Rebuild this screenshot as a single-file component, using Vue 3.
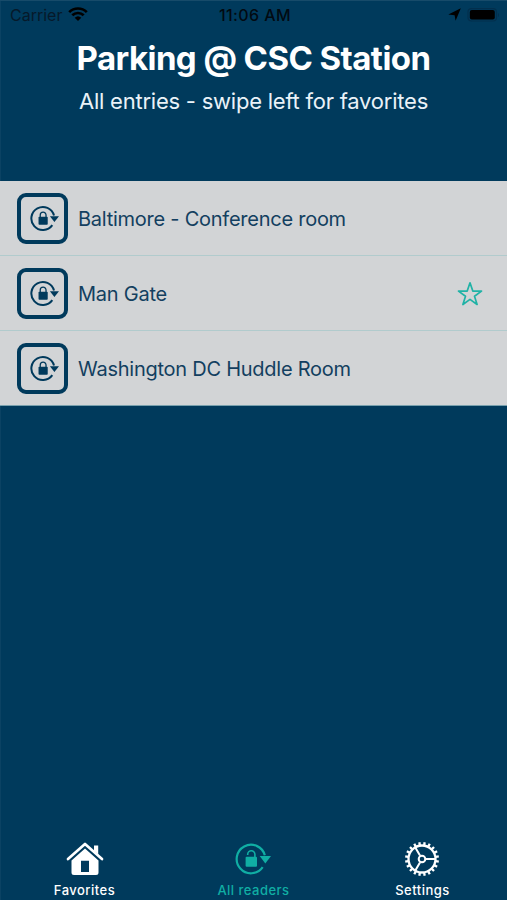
<script setup>
const entries = [
  { name: 'Baltimore - Conference room', favorite: false },
  { name: 'Man Gate', favorite: true },
  { name: 'Washington DC Huddle Room', favorite: false },
]
const teeth = Array.from({ length: 20 }, (_, i) => i * 18 + 9)
</script>

<template>
  <div class="screen">
    <header class="status">
      <div class="carrier">
        <span class="carrier-name">Carrier</span>
        <svg class="wifi" width="20" height="15" viewBox="0 0 20 15">
          <path d="M1.2 5.1a12.6 12.6 0 0 1 17.6 0M4.3 8.3a8.2 8.2 0 0 1 11.4 0" fill="none" stroke="currentColor" stroke-width="2.7" />
          <path d="M6.7 10.8a4.8 4.8 0 0 1 6.6 0L10 14z" fill="currentColor" />
        </svg>
      </div>
      <span class="time">11:06 AM</span>
      <div class="indicators">
        <svg width="13" height="13" viewBox="0 0 13 13"><path d="M12.8.2 7.6 12.7 6.6 7.3.3 6.6z" fill="currentColor" /></svg>
        <svg width="33" height="14" viewBox="0 0 33 14">
          <rect x="1" y=".6" width="28.5" height="12.4" rx="3.5" fill="none" stroke="#022f4d" stroke-width="1.2" />
          <rect x="2.8" y="2" width="25" height="9.4" rx="2" fill="currentColor" />
          <path d="M31 5v4q1-.5 1-2t-1-2" fill="#022f4d" />
        </svg>
      </div>
    </header>

    <div class="heading">
      <h1>Parking @ CSC Station</h1>
      <p>All entries - swipe left for favorites</p>
    </div>

    <ul class="list">
      <li v-for="entry in entries" :key="entry.name" class="row">
        <div class="badge">
          <svg width="29" height="27" viewBox="0 0 36 33">
            <path d="M29.8 12.8A14.3 14.3 0 1 0 27.7 24.7" fill="none" stroke="currentColor" stroke-width="2.5" />
            <path d="M24.7 13.6H36l-5.7 7.3z" fill="currentColor" />
            <rect x="10.6" y="14.2" width="11.4" height="10" rx="1" fill="currentColor" />
            <path d="M12.7 15v-2.8a3.6 3.6 0 0 1 7.2 0V15" fill="none" stroke="currentColor" stroke-width="1.6" />
          </svg>
        </div>
        <span class="name">{{ entry.name }}</span>
        <svg v-if="entry.favorite" class="star" width="26" height="26" viewBox="0 0 26 26">
          <path d="M13 1.8l2.8 8.3h8.7l-7 5.1 2.6 8.3L13 18.4l-7.1 5.1 2.6-8.3-7-5.1h8.7z" fill="none" stroke="currentColor" stroke-width="1.7" stroke-linejoin="round" />
        </svg>
      </li>
    </ul>

    <nav class="tabs">
      <div class="tab">
        <svg width="38" height="35" viewBox="0 0 38 35">
          <path d="M2 17.5 19 2.5l17 15" fill="none" stroke="currentColor" stroke-width="2.7" stroke-linecap="round" stroke-linejoin="round" />
          <path d="M28 4h4.2v9L28 9.3z" fill="currentColor" />
          <path fill-rule="evenodd" d="M19 6.9 32.5 18.9V31q0 2.5-2.5 2.5H8q-2.5 0-2.5-2.5V18.9zM15 19.3V30.5h8V19.3z" fill="currentColor" />
        </svg>
        <span class="label">Favorites</span>
      </div>
      <div class="tab active">
        <svg width="37" height="33" viewBox="0 0 37 33">
          <path d="M29.8 12.8A14.3 14.3 0 1 0 27.7 24.7" fill="none" stroke="currentColor" stroke-width="2.2" />
          <path d="M24.7 13.6H36l-5.7 7.3z" fill="currentColor" />
          <rect x="10.6" y="14.2" width="11.4" height="10" rx="1" fill="currentColor" />
          <path d="M12.7 12.4v-.6a3.6 3.6 0 0 1 7.2 0V15" fill="none" stroke="currentColor" stroke-width="1.6" />
        </svg>
        <span class="label">All readers</span>
      </div>
      <div class="tab">
        <svg width="38" height="36" viewBox="-18 -18 38 36">
          <g fill="none" stroke="currentColor">
            <circle r="13.5" stroke-width="2.3" />
            <circle r="3.3" stroke-width="2" />
            <path d="M4 0H13M-2-3.5-6.7-11.6M-2 3.5-6.7 11.6" stroke-width="2" />
            <path v-for="angle in teeth" :key="angle" d="M14 0H17" stroke-width="2.3" :transform="`rotate(${angle})`" />
          </g>
        </svg>
        <span class="label">Settings</span>
      </div>
    </nav>
  </div>
</template>

<style>
body { margin: 0; background: #003a5c; }
</style>

<style scoped>
* { box-sizing: border-box; }
.screen {
  width: 507px;
  height: 900px;
  display: flex;
  flex-direction: column;
  background: #003a5c;
  border-top: 1px solid #174b6a;
  box-shadow: inset 1px 0 #0b4263;
  font-family: Inter, "Liberation Sans", sans-serif;
  overflow: hidden;
}
.status {
  height: 27px;
  margin-bottom: 2px;
  flex: none;
  display: grid;
  grid-template-columns: 1fr auto 1fr;
  align-items: center;
  padding: 0 7px 0 10px;
  color: #020a12;
  font-size: 16px;
  line-height: 20px;
}
.carrier { display: flex; align-items: center; gap: 6px; color: #06192a; }
.wifi { color: #000; }
.time { font-weight: 500; letter-spacing: .4px; white-space: nowrap; }
.indicators { display: flex; align-items: center; justify-content: flex-end; gap: 6px; color: #000; }
.heading { height: 151px; flex: none; text-align: center; color: #fff; white-space: nowrap; }
h1 { margin: 7px 0 0; font-size: 33px; line-height: 42px; font-weight: 700; letter-spacing: -.57px; }
p { margin: 9px 0 0; font-size: 22px; line-height: 26px; letter-spacing: -.23px; color: #eaf2f8; }
.list { margin: 0; padding: 0; list-style: none; flex: none; }
.row {
  height: 75px;
  display: flex;
  align-items: center;
  padding: 0 24px 0 17px;
  background: #d2d4d6;
  border-bottom: 1px solid #b1cbcd;
  color: #133f60;
  font-size: 20px;
}
.row:last-child { border-bottom-color: #78a0ad; }
.badge {
  width: 51px;
  height: 51px;
  margin-top: 1px;
  padding-left: 3px;
  display: flex;
  align-items: center;
  justify-content: center;
  border: 4px solid #003a5c;
  border-radius: 9px;
  color: #003a5c;
}
.name { margin: 1px 0 0 10px; letter-spacing: -.25px; white-space: nowrap; }
.star { margin: 2px 0 0 auto; color: #20b2a6; }
.tabs { margin-top: auto; height: 62px; display: grid; grid-template-columns: repeat(3, 1fr); }
.tab { display: flex; flex-direction: column; align-items: center; color: #fff; }
.tab svg { height: 36px; margin-top: 3px; }
.active { color: #10aea4; }
.label { margin-top: 5px; font-size: 13px; line-height: 16px; font-weight: 500; letter-spacing: .48px; white-space: nowrap; }
</style>
